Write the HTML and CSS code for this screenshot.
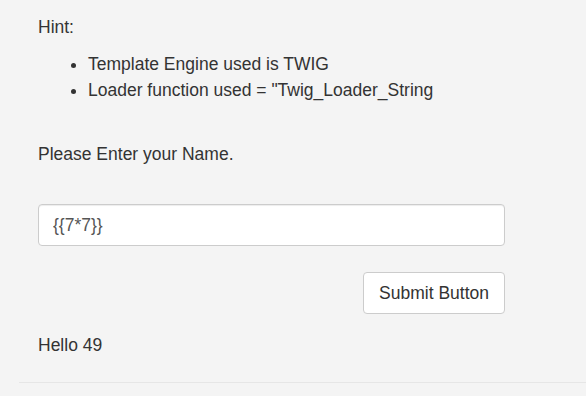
FILE: index.html
```html
<!DOCTYPE html>
<html lang="en">

<head>
    <meta charset="utf-8">
    <title>Twig SSTI</title>
    <link rel="stylesheet" href="styles.css">
</head>

<body>
    <div class="page">
        <div class="content">
            <p class="hint">Hint:</p>
            <ul class="hint-list">
                <li>Template Engine used is TWIG</li>
                <li>Loader function used = "Twig_Loader_String</li>
            </ul>

            <p class="prompt">Please Enter your Name.</p>

            <form class="name-form">
                <input type="text" class="form-control" name="name" value="{{7*7}}">
                <div class="actions">
                    <button type="button" class="btn">Submit Button</button>
                </div>
            </form>

            <p class="result">Hello 49</p>
        </div>
        <hr class="rule">
    </div>
</body>

</html>
```

FILE: styles.css
```css
body {
    margin: 0;
    background-color: #f4f4f4;
    color: #333;
    font-family: 'Liberation Sans', Arial, sans-serif;
    font-size: 17.5px;
    line-height: 26px;
}

.page {
    padding-top: 14px;
    padding-left: 19px;
}

.content {
    width: 467px;
    padding-left: 19px;
}

p {
    margin: 0;
}

.hint-list {
    margin: 11px 0 0;
    padding-left: 50px;
}

.prompt {
    margin-top: 38px;
}

.name-form {
    margin-top: 37px;
}

.form-control {
    display: block;
    box-sizing: border-box;
    width: 100%;
    height: 42px;
    margin: 0;
    padding: 0 14px;
    font-family: inherit;
    font-size: 17.5px;
    color: #555;
    background-color: #fff;
    border: 1px solid #ccc;
    border-radius: 4px;
    box-shadow: inset 0 1px 1px rgba(0, 0, 0, 0.075);
}

.actions {
    display: flex;
    justify-content: flex-end;
    margin-top: 26px;
}

.btn {
    box-sizing: border-box;
    height: 42px;
    padding: 0 15px;
    font-family: inherit;
    font-size: 17.5px;
    color: #333;
    background-color: #fff;
    border: 1px solid #ccc;
    border-radius: 4px;
    cursor: pointer;
}

.result {
    margin-top: 18px;
}

.rule {
    margin: 24px 0 0;
    border: 0;
    border-top: 1px solid #e6e6e6;
}
```
